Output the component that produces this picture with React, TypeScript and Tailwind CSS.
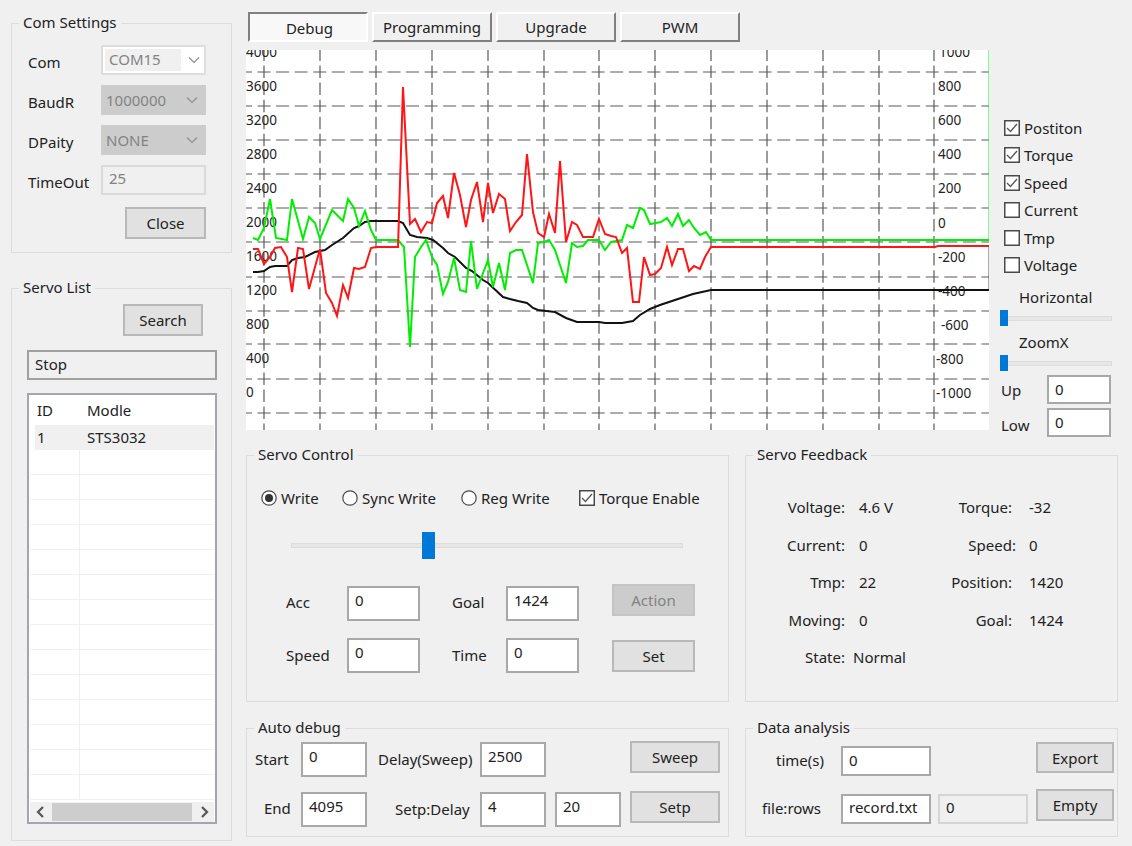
import React from 'react';

const FONT = '"Noto Sans", "Open Sans", sans-serif';

// traced from the plot, page coordinates
const RED =
  '253,249 258,249 264,264 270,257 275,248 281,247 287,257 292,292 298,248 303,249 309,289 315,267 320,249 326,293 332,303 337,316 343,285 348,298 354,268 359,269 365,267 371,248 376,247 398,247 403,87 410,224 415,219 421,232 427,222 432,223 437,203 443,196 448,218 454,173 460,195 466,227 471,200 477,182 483,222 488,183 493,213 499,194 505,199 510,231 516,222 522,215 527,154 533,212 538,233 544,237 549,214 555,233 560,161 566,242 572,222 577,225 583,237 593,237 599,219 605,234 611,236 616,237 622,253 627,248 633,302 639,302 644,257 650,275 655,274 661,268 667,247 672,265 678,249 683,249 689,271 694,266 700,269 705,257 711,247 935,247 938,246 989,246';
const GREEN =
  '253,238 258,240 264,228 270,199 276,238 287,240 292,199 303,239 309,217 315,223 320,239 332,210 343,221 348,199 354,208 359,226 365,211 371,230 376,240 398,240 404,247 410,347 415,257 421,247 426,240 432,257 437,265 443,294 448,282 454,258 460,290 466,292 471,241 477,289 488,260 493,287 499,263 505,290 510,253 516,250 522,250 533,283 538,243 544,242 549,240 555,250 566,283 572,243 577,247 583,246 588,240 599,240 605,250 611,242 622,240 627,225 633,228 640,208 644,210 650,224 661,222 667,218 672,226 678,214 683,226 689,220 694,228 700,235 706,232 711,240 989,240';
const BLACK =
  '253,272 258,272 264,271 270,267 275,266 287,266 292,260 298,258 305,257 315,252 325,250 332,245 343,238 354,228 359,226 365,222 371,221 398,221 403,223 410,235 417,237 427,238 433,240 443,248 448,253 455,257 466,268 472,271 483,280 488,283 503,297 510,299 518,301 527,303 533,308 538,310 555,312 566,318 577,322 599,322 605,323 622,323 633,321 640,315 650,309 660,305 678,299 693,294 711,290 989,290';

const V_LINES = [264, 320, 376, 432, 488, 544, 599, 655, 711, 767, 823, 879, 934];
const H_LINES = [72, 106, 140, 174, 208, 242, 277, 311, 344, 379, 413];
const LEFT_AXIS = ['4000', '3600', '3200', '2800', '2400', '2000', '1600', '1200', '800', '400', '0'];
const RIGHT_AXIS: [string, number][] = [
  ['1000', 939], ['800', 938], ['600', 938], ['400', 938], ['200', 938], ['0', 938],
  ['-200', 938], ['-400', 938], ['-600', 941], ['-800', 936], ['-1000', 936],
];

const Chart = () => (
  <svg className="w-[743px] h-[380px] shrink-0 bg-white block" viewBox="246 50 743 380">
    <g stroke="#5a5a5a" strokeWidth="1.2">
      {V_LINES.map((x) => (
        <line key={x} x1={x} y1="50" x2={x} y2="430" strokeDasharray="12.5 4.55" strokeDashoffset="1.5" />
      ))}
      {H_LINES.map((y) => (
        <line key={y} x1="246" y1={y} x2="989" y2={y} strokeDasharray="13 5.56" strokeDashoffset="7" />
      ))}
    </g>
    <line x1="989" y1="50" x2="989" y2="240" stroke="#00ff00" strokeWidth="1" />
    <line x1="989" y1="246" x2="989" y2="290" stroke="#555555" strokeWidth="1" />
    <g fontFamily={FONT} fontSize="13.5" fill="#222222">
      {LEFT_AXIS.map((t, i) => (
        <text key={t} x="246" y={57 + i * 34}>{t}</text>
      ))}
      {RIGHT_AXIS.map(([t, x], i) => (
        <text key={t} x={x} y={57 + i * 34.1}>{t}</text>
      ))}
    </g>
    <polyline points={BLACK} fill="none" stroke="#111111" strokeWidth="2" />
    <polyline points={GREEN} fill="none" stroke="#00ee00" strokeWidth="2" />
    <polyline points={RED} fill="none" stroke="#ff1515" strokeWidth="2" />
  </svg>
);

const Group: React.FC<{ title: string; className: string; children: React.ReactNode }> = ({ title, className, children }) => (
  <fieldset className={`border border-[#dcdcdc] min-w-0 shrink-0 ${className}`}>
    <legend className="ml-[7px] px-[4px] h-[20px] leading-[19px]">{title}</legend>
    {children}
  </fieldset>
);

const Button: React.FC<{ label: string; className: string; disabled?: boolean }> = ({ label, className, disabled }) => (
  <div
    className={`flex items-center justify-center shrink-0 border-2 ${
      disabled ? 'bg-[#cccccc] border-[#c4c4c4] text-[#838383]' : 'bg-[#e1e1e1] border-[#b8b8b8]'
    } ${className}`}
  >
    {label}
  </div>
);

const Field: React.FC<{ value: string; className: string }> = ({ value, className }) => (
  <div className={`bg-white border-2 border-[#a8a8a8] pl-[6px] pt-[1px] leading-[22px] shrink-0 ${className}`}>{value}</div>
);

const Chevron = () => (
  <svg className="w-[14px] h-[8px] shrink-0" viewBox="0 0 14 8">
    <path d="M2 1.5 L7 6.5 L12 1.5" fill="none" stroke="#8f8f8f" strokeWidth="1.2" />
  </svg>
);

const Check: React.FC<{ checked?: boolean }> = ({ checked }) => (
  <svg className="w-[16px] h-[16px] shrink-0" viewBox="0 0 16 16">
    <rect x="0.75" y="0.75" width="14.5" height="14.5" fill="#ffffff" stroke="#4a4a4a" strokeWidth="1.5" />
    {checked && <path d="M3 8 L6.5 11.5 L13 4" fill="none" stroke="#555555" strokeWidth="1.3" />}
  </svg>
);

const Radio: React.FC<{ checked?: boolean }> = ({ checked }) => (
  <svg className="w-[16px] h-[16px] shrink-0" viewBox="0 0 16 16">
    <circle cx="8" cy="8" r="7.2" fill="#ffffff" stroke="#4a4a4a" strokeWidth="1.2" />
    {checked && <circle cx="8" cy="8" r="4" fill="#333333" />}
  </svg>
);

const SideSlider = () => (
  <div className="relative w-[112px] h-[16px] ml-[-4px] shrink-0">
    <div className="absolute left-[7px] right-0 top-[6px] h-[5px] bg-[#e7e7e7] border border-[#dcdcdc]" />
    <div className="absolute left-0 top-0 w-[8px] h-[16px] bg-[#0078d7]" />
  </div>
);

const ComRow: React.FC<{ label: string; children: React.ReactNode }> = ({ label, children }) => (
  <div className="flex items-center h-[30px]">
    <span className="w-[73px] pt-[4px]">{label}</span>
    {children}
  </div>
);

const Select: React.FC<{ value: string }> = ({ value }) => (
  <div className="w-[105px] h-[30px] bg-[#cccccc] flex items-center justify-between pl-[5px] pr-[7px] text-[#838383]">
    <span>{value}</span>
    <Chevron />
  </div>
);

const TAB_CLASS =
  'w-[120px] h-[30px] flex items-center justify-center bg-[#f0f0f0] border-2 border-t-white border-l-white border-r-[#808080] border-b-[#808080]';

const FEEDBACK: [string, string, string, string][] = [
  ['Voltage:', '4.6 V', 'Torque:', '-32'],
  ['Current:', '0', 'Speed:', '0'],
  ['Tmp:', '22', 'Position:', '1420'],
  ['Moving:', '0', 'Goal:', '1424'],
  ['State:', 'Normal', '', ''],
];

export default function App() {
  return (
    <div
      className="w-[1132px] h-[846px] bg-[#f0f0f0] flex overflow-hidden text-[15px] leading-[20px] text-[#222222]"
      style={{ fontFamily: FONT }}
    >
      {/* Left column */}
      <div className="w-[221px] ml-[11px] pt-[13px] shrink-0 flex flex-col">
        <Group title="Com Settings" className="h-[240px]">
          <div className="pt-[12px] pl-[16px] flex flex-col gap-[10px]">
            <ComRow label="Com">
              <div className="w-[105px] h-[30px] bg-white border-2 border-[#dddddd] flex items-center justify-between pl-[2px] pr-[3px]">
                <span className="w-[76px] h-[22px] bg-[#f0f0f0] pl-[4px] text-[#838383]">COM15</span>
                <Chevron />
              </div>
            </ComRow>
            <ComRow label="BaudR"><Select value="1000000" /></ComRow>
            <ComRow label="DPaity"><Select value="NONE" /></ComRow>
            <ComRow label="TimeOut">
              <div className="w-[105px] h-[30px] border-2 border-[#dadada] pl-[6px] pt-[1px] text-[#838383]">25</div>
            </ComRow>
          </div>
          <div className="flex justify-end pr-[25px] pt-[12px]">
            <Button label="Close" className="w-[81px] h-[32px]" />
          </div>
        </Group>

        <Group title="Servo List" className="h-[563px] mt-[25px]">
          <div className="flex justify-end pr-[28px] pt-[6px]">
            <Button label="Search" className="w-[80px] h-[32px]" />
          </div>
          <div className="ml-[15px] mr-[14px] mt-[14px] h-[30px] border-2 border-[#a0a0a0] pl-[6px] leading-[24px]">Stop</div>
          <div className="ml-[15px] mr-[14px] mt-[13px] h-[431px] border-2 border-[#a3a7ad] bg-white flex flex-col">
            <div className="flex h-[30px] items-center shrink-0">
              <span className="w-[51px] pl-[8px]">ID</span>
              <span className="pl-[7px]">Modle</span>
            </div>
            <div className="flex h-[25px] items-center bg-[#f0f0f0] ml-[6px] mr-[1px] pb-[1px] shrink-0">
              <span className="w-[45px] pl-[2px]">1</span>
              <span className="pl-[7px]">STS3032</span>
            </div>
            {Array.from({ length: 14 }).map((_, i) => (
              <div key={i} className="flex h-[25px] border-b border-[#f0f0f0] shrink-0 mx-[1px]">
                <div className="w-[50px] border-r border-[#f0f0f0]" />
              </div>
            ))}
            <div className="flex items-center justify-between h-[20px] mt-[2px] mx-[1px] bg-[#f0f0f0] shrink-0">
              <svg className="w-[20px] h-[20px] shrink-0" viewBox="0 0 20 20">
                <path d="M13 5 L8 10 L13 15" fill="none" stroke="#555555" strokeWidth="2.2" />
              </svg>
              <div className="w-[140px] h-[18px] bg-[#cdcdcd]" />
              <svg className="w-[20px] h-[20px] shrink-0" viewBox="0 0 20 20">
                <path d="M8 5 L13 10 L8 15" fill="none" stroke="#555555" strokeWidth="2.2" />
              </svg>
            </div>
          </div>
        </Group>
      </div>

      {/* Right column */}
      <div className="ml-[14px] pt-[12px] flex flex-col w-[886px] shrink-0">
        <div className="flex gap-[4px] pl-[2px] h-[30px]">
          <div className="w-[120px] h-[30px] flex items-center justify-center pl-[3px] pt-[1px] bg-[#f8f8f8] border-2 border-t-[#808080] border-l-[#808080] border-r-white border-b-white">
            Debug
          </div>
          <div className={TAB_CLASS}>Programming</div>
          <div className={TAB_CLASS}>Upgrade</div>
          <div className={TAB_CLASS}>PWM</div>
        </div>

        <div className="flex mt-[8px] h-[380px]">
          <Chart />
          <div className="ml-[15px] w-[112px] h-[387px] shrink-0 pt-[64px] flex flex-col">
            {[
              ['Postiton', true],
              ['Torque', true],
              ['Speed', true],
              ['Current', false],
              ['Tmp', false],
              ['Voltage', false],
            ].map(([label, checked]) => (
              <div key={label as string} className="flex items-center gap-[4px] h-[27.5px] shrink-0">
                <Check checked={checked as boolean} />
                <span>{label}</span>
              </div>
            ))}
            <div className="pl-[15px] mt-[8px] h-[22px] shrink-0">Horizontal</div>
            <div className="mt-[1px] shrink-0"><SideSlider /></div>
            <div className="pl-[15px] mt-[6px] h-[22px] shrink-0">ZoomX</div>
            <div className="mt-[1px] shrink-0"><SideSlider /></div>
            <div className="flex items-center justify-between h-[29px] mt-[4px] ml-[-3px] shrink-0">
              <span className="pt-[1px]">Up</span>
              <Field value="0" className="w-[64px] h-[29px] mr-[5px]" />
            </div>
            <div className="flex items-center justify-between h-[29px] mt-[4px] ml-[-3px] shrink-0">
              <span className="pt-[5px]">Low</span>
              <Field value="0" className="w-[64px] h-[29px] mr-[5px]" />
            </div>
          </div>
        </div>

        <div className="flex gap-[16px] mt-[15px]">
          <Group title="Servo Control" className="w-[483px] h-[257px]">
            <div className="flex items-center h-[20px] mt-[23px] pl-[14px]">
              <div className="w-[81px] flex items-center gap-[4px]"><Radio checked /><span>Write</span></div>
              <div className="w-[119px] flex items-center gap-[4px]"><Radio /><span>Sync Write</span></div>
              <div className="w-[118px] flex items-center gap-[4px]"><Radio /><span>Reg Write</span></div>
              <div className="flex items-center gap-[4px]"><Check checked /><span>Torque Enable</span></div>
            </div>
            <div className="relative h-[27px] mt-[24px] ml-[44px] w-[392px]">
              <div className="absolute left-0 right-0 top-[11px] h-[5px] bg-[#e7e7e7] border border-[#dcdcdc]" />
              <div className="absolute left-[131px] top-0 w-[13px] h-[27px] bg-[#0078d7]" />
            </div>
            <div className="flex items-center h-[38px] mt-[25px] pl-[39px]">
              <span className="w-[61px] pb-[2px]">Acc</span>
              <Field value="0" className="w-[73px] h-[35px]" />
              <span className="w-[32px] ml-[32px] mr-[22px] pb-[2px]">Goal</span>
              <Field value="1424" className="w-[73px] h-[35px]" />
              <Button label="Action" disabled className="w-[83px] h-[32px] ml-[33px] mb-[6px]" />
            </div>
            <div className="flex items-center h-[35px] mt-[16px] pl-[39px]">
              <span className="w-[61px] pb-[2px]">Speed</span>
              <Field value="0" className="w-[73px] h-[35px]" />
              <span className="w-[32px] ml-[32px] mr-[22px] pb-[2px]">Time</span>
              <Field value="0" className="w-[73px] h-[35px]" />
              <Button label="Set" className="w-[83px] h-[32px] ml-[33px]" />
            </div>
          </Group>

          <Group title="Servo Feedback" className="w-[373px] h-[257px]">
            <div className="grid grid-cols-[100px_75px_69px_auto] auto-rows-[20px] gap-x-[13px] gap-y-[17.5px] pt-[32px]">
              {FEEDBACK.map(([a, b, c, d]) => (
                <React.Fragment key={a}>
                  <span className="text-right pr-[1px]">{a}</span>
                  <span className={a === 'State:' ? 'ml-[-6px]' : ''}>{b}</span>
                  <span className={`text-right ${c === 'Speed:' ? '' : 'pr-[4px]'}`}>{c}</span>
                  <span>{d}</span>
                </React.Fragment>
              ))}
            </div>
          </Group>
        </div>

        <div className="flex gap-[16px] mt-[16px]">
          <Group title="Auto debug" className="w-[483px] h-[119px]">
            <div className="flex items-center h-[35px] mt-[4px] pl-[8px]">
              <span className="w-[46px] pb-[2px]">Start</span>
              <Field value="0" className="w-[66px] h-[35px]" />
              <span className="w-[102px] ml-[11px] whitespace-nowrap pb-[2px]">Delay(Sweep)</span>
              <Field value="2500" className="w-[66px] h-[35px]" />
              <Button label="Sweep" className="w-[90px] h-[32px] ml-[84px] mb-[6px]" />
            </div>
            <div className="flex items-center h-[35px] mt-[15px] pl-[17px]">
              <span className="w-[37px] pb-[3px]">End</span>
              <Field value="4095" className="w-[66px] h-[35px]" />
              <span className="w-[85px] ml-[28px] whitespace-nowrap pb-[2px]">Setp:Delay</span>
              <Field value="4" className="w-[66px] h-[35px]" />
              <Field value="20" className="w-[66px] h-[35px] ml-[9px]" />
              <Button label="Setp" className="w-[90px] h-[32px] ml-[9px] mb-[6px]" />
            </div>
          </Group>

          <Group title="Data analysis" className="w-[373px] h-[119px]">
            <div className="flex items-center h-[31px] mt-[7px] pl-[30px]">
              <span className="w-[65px] pb-[2px]">time(s)</span>
              <Field value="0" className="w-[90px] h-[30px]" />
              <Button label="Export" className="w-[78px] h-[31px] ml-[105px] mb-[6px]" />
            </div>
            <div className="flex items-center h-[31px] mt-[17px] pl-[16px]">
              <span className="w-[79px] pb-[2px]">file:rows</span>
              <Field value="record.txt" className="w-[90px] h-[30px] !pt-0" />
              <div className="w-[90px] h-[30px] ml-[7px] border-2 border-[#d4d4d4] pl-[6px] leading-[22px] shrink-0">0</div>
              <Button label="Empty" className="w-[78px] h-[32px] ml-[8px] mb-[8px]" />
            </div>
          </Group>
        </div>
      </div>
    </div>
  );
}
